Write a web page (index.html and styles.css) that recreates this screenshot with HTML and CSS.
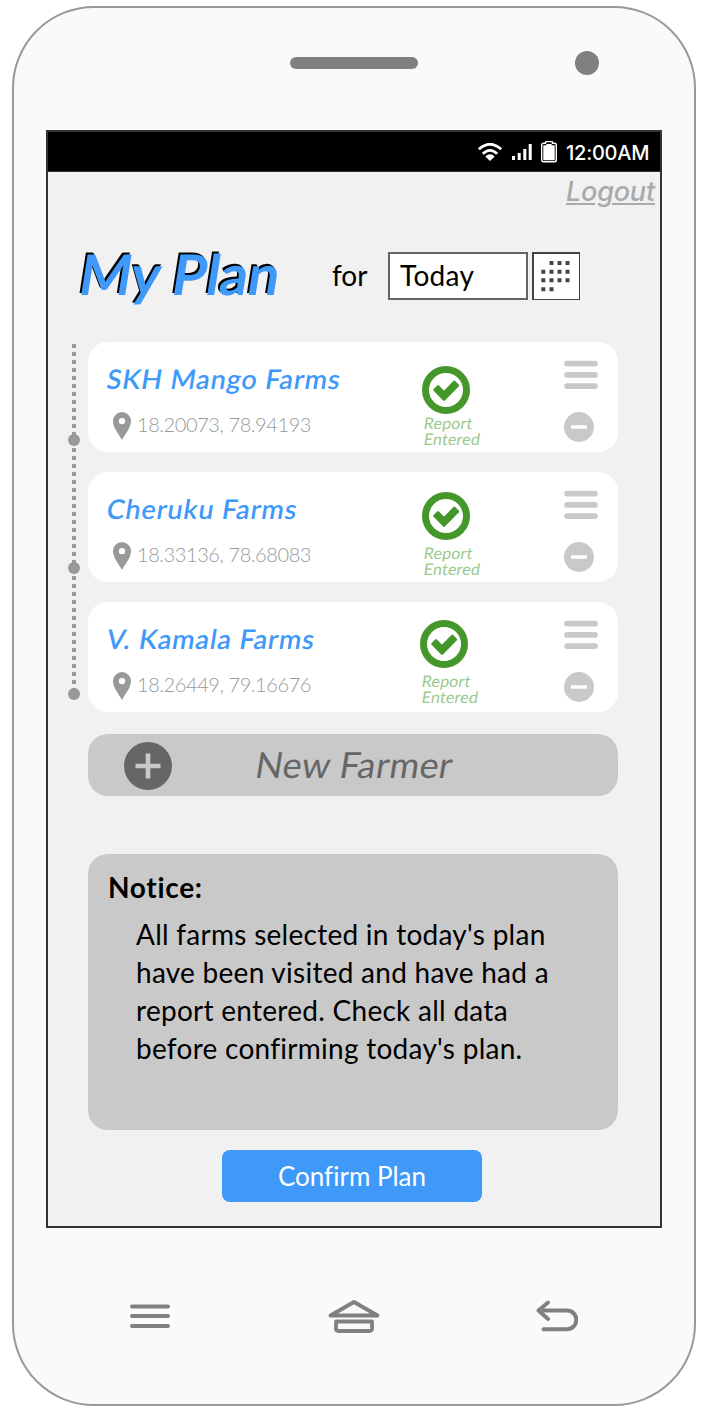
FILE: index.html
```html
<!DOCTYPE html>
<html lang="en">
<head>
<meta charset="utf-8">
<title>My Plan</title>
<link rel="stylesheet" href="styles.css">
</head>
<body>
<svg class="defs" aria-hidden="true">
  <symbol id="pin" viewBox="0 0 18 28"><path fill-rule="evenodd" d="M9 0a9 9 0 0 0-9 9c0 6.500 5.500 12.500 9 19 3.500-6.500 9-12.500 9-19a9 9 0 0 0-9-9zm0 5.900a3.200 3.200 0 1 1 0 6.400 3.200 3.200 0 0 1 0-6.400z"/></symbol>
  <symbol id="check" viewBox="0 0 48 48"><circle cx="24" cy="24" r="20.500" fill="none" stroke="currentColor" stroke-width="7"/><path d="M12.500 23.800L16 20.300l6 6L32.300 16l3.500 3.500L22 33.500z" fill="currentColor" stroke="currentColor" stroke-width="2.600" stroke-linejoin="round"/></symbol>
  <symbol id="bars" viewBox="0 0 34 29"><path d="M3 3.600h28M3 14.900h28M3 26.100h28" fill="none" stroke="currentColor" stroke-width="5.700" stroke-linecap="round"/></symbol>
  <symbol id="minus" viewBox="0 0 30 30"><circle cx="15" cy="15" r="15" fill="currentColor"/><path d="M7 15h16" stroke="#fff" stroke-width="3.400"/></symbol>
</svg>
<div class="phone">
  <header class="bezel">
    <span class="speaker"></span>
    <span class="camera"></span>
  </header>
  <main class="screen">
    <div class="statusbar">
      <svg class="wifi" viewBox="0 0 24 18"><path d="M.8 6.200Q12-3.700 23.200 6.200M4.800 10.700Q12 4 19.200 10.700" fill="none" stroke="#fff" stroke-width="2.800"/><path d="M7.300 13.500Q12 9 16.700 13.500L12 18z" fill="#fff"/></svg>
      <svg class="signal" viewBox="0 0 20 16"><path d="M0 12h3v4H0zM5.700 9h3v7h-3zM11.300 5h3v11h-3zM16.700 0h3v16h-3z" fill="#fff"/></svg>
      <svg class="battery" viewBox="0 0 16 22"><path d="M4.500 2.200V1.500Q4.500.5 5.500.5h5q1 0 1 1v.7h2q1.800 0 1.800 1.800v15q0 1.800-1.800 1.800h-11Q.7 20.800.7 19V4q0-1.800 1.800-1.800z" fill="none" stroke="#fff" stroke-width="1.400"/><path d="M2.300 4.200h3V3h5.400v1.200h3v15h-11.400z" fill="#fff"/></svg>
      <span class="clock">12:00AM</span>
    </div>
    <a class="logout">Logout</a>
    <div class="heading">
      <h1 class="title"><span class="slant">My Plan</span></h1>
      <span class="for">for</span>
      <div class="date">Today</div>
      <button class="calendar" aria-label="Pick a date">
        <svg viewBox="0 0 30 31"><path d="M8.500 0h4v4h-4zm8 0h4v4h-4zm8 0h4v4h-4zM.3 8.700h4v4h-4zm8.200 0h4v4h-4zm8 0h4v4h-4zm8 0h4v4h-4zM.3 17.300h4v4h-4zm8.200 0h4v4h-4zm8 0h4v4h-4zm8 0h4v4h-4zM.3 26.200h4v4h-4zm8.200 0h4v4h-4z" fill="#444"/></svg>
      </button>
    </div>
    <div class="plan">
      <svg class="timeline" viewBox="0 0 12 370"><path d="M6 2v352" stroke="#999" stroke-width="4" stroke-dasharray="4 4"/><circle cx="6" cy="98" r="6"/><circle cx="6" cy="226" r="6"/><circle cx="6" cy="352" r="6"/></svg>
      <div class="farms">
        <article class="farm">
          <div class="info"><h2 class="name"><span class="slant">SKH Mango Farms</span></h2><div class="place"><svg class="pin"><use href="#pin"/></svg><span class="coords">18.20073, 78.94193</span></div></div>
          <div class="status"><svg class="check"><use href="#check"/></svg><p class="report"><span class="slant">Report</span><span class="slant">Entered</span></p></div>
          <div class="actions"><svg class="bars"><use href="#bars"/></svg><svg class="minus"><use href="#minus"/></svg></div>
        </article>
        <article class="farm">
          <div class="info"><h2 class="name"><span class="slant">Cheruku Farms</span></h2><div class="place"><svg class="pin"><use href="#pin"/></svg><span class="coords">18.33136, 78.68083</span></div></div>
          <div class="status second"><svg class="check"><use href="#check"/></svg><p class="report"><span class="slant">Report</span><span class="slant">Entered</span></p></div>
          <div class="actions"><svg class="bars"><use href="#bars"/></svg><svg class="minus"><use href="#minus"/></svg></div>
        </article>
        <article class="farm">
          <div class="info"><h2 class="name"><span class="slant">V. Kamala Farms</span></h2><div class="place"><svg class="pin"><use href="#pin"/></svg><span class="coords">18.26449, 79.16676</span></div></div>
          <div class="status third"><svg class="check"><use href="#check"/></svg><p class="report"><span class="slant">Report</span><span class="slant">Entered</span></p></div>
          <div class="actions"><svg class="bars"><use href="#bars"/></svg><svg class="minus"><use href="#minus"/></svg></div>
        </article>
      </div>
    </div>
    <button class="new-farmer">
      <svg class="plus" viewBox="0 0 48 48"><circle cx="24" cy="24" r="24" fill="#666"/><path d="M11.500 24h25M24 11.500v25" stroke="#c9c9c9" stroke-width="4.600"/></svg>
      <span class="new-label slant">New Farmer</span>
    </button>
    <section class="notice">
      <h3 class="notice-title">Notice:</h3>
      <p class="notice-text">All farms selected in today's plan<br>have been visited and have had a<br>report entered. Check all data<br>before confirming today's plan.</p>
    </section>
    <button class="confirm">Confirm Plan</button>
  </main>
  <nav class="keys">
    <svg class="key-menu" viewBox="0 0 40 24"><path d="M2 2.400h36M2 12h36M2 22h36" fill="none" stroke="#808080" stroke-width="4" stroke-linecap="round"/></svg>
    <svg class="key-home" viewBox="0 0 52 34"><path d="M26 3L2.500 16.500h47z" fill="none" stroke="#808080" stroke-width="3.800" stroke-linejoin="round"/><path d="M8 22.500h36v7q0 2.500-2.500 2.500h-31Q8 32 8 29.500z" fill="none" stroke="#808080" stroke-width="3.800" stroke-linejoin="round"/></svg>
    <svg class="key-back" viewBox="0 0 42 32"><path d="M12 2.500L2.500 10.500l9.500 8.500M8 10.500H31a9.300 9.300 0 0 1 0 18.700H7.500" fill="none" stroke="#808080" stroke-width="4" stroke-linecap="round" stroke-linejoin="round"/></svg>
  </nav>
</div>
</body>
</html>
```
FILE: styles.css
```css
* { box-sizing: border-box; margin: 0; padding: 0; }
body { width: 706px; height: 1414px; padding: 6px 0 0 12px; background: #fff; font-family: Lato, "Open Sans", sans-serif; font-variant-ligatures: none; overflow: hidden; }
button { border: 0; font: inherit; }
svg { display: block; flex: none; }
span, h1, h2, h3 { white-space: nowrap; }
.defs { width: 0; height: 0; position: absolute; }
.slant { display: inline-block; transform: skewX(-9deg); }

.phone { width: 684px; height: 1400px; border: 2px solid #999; border-radius: 82px; background: #f9faf9; padding: 0 32px; }
.bezel { display: flex; height: 122px; padding: 43px 0 0 244px; gap: 157px; }
.speaker { width: 128px; height: 12px; margin-top: 6px; border-radius: 6px; background: #808080; }
.camera { width: 24px; height: 24px; border-radius: 50%; background: #808080; }

.screen { width: 616px; height: 1098px; border: 2px solid #333; background: #f1f1f1; display: flex; flex-direction: column; }
.statusbar { height: 40px; background: #000; border-bottom: 1px solid #333; display: flex; align-items: center; justify-content: flex-end; padding-right: 11px; color: #fff; }
.wifi { width: 24px; height: 18px; margin-right: 10px; }
.signal { width: 20px; height: 16px; margin-right: 9px; }
.battery { width: 16px; height: 22px; margin-right: 9px; }
.clock { font: 500 20px/24px Inter, sans-serif; width: 83px; margin-top: 3px; letter-spacing: -0.25px; }
.logout { align-self: flex-end; margin: 1px 4px 0 0; height: 37px; width: 90px; font: italic 500 27px/38px Inter, sans-serif; letter-spacing: -0.2px; color: #aaa; text-decoration: underline; text-decoration-thickness: 2px; text-underline-offset: 2px; white-space: nowrap; }

.heading { display: flex; height: 132px; padding: 42px 0 0 32px; }
.title { width: 252px; margin-top: -2px; font: 700 56px/48px Lato, sans-serif; letter-spacing: -0.4px; color: #3f99f8; text-shadow: -2px -2px 0 #000; }
.for { width: 56px; font-size: 28px; line-height: 46px; }
.date { width: 140px; height: 48px; margin-right: 4px; padding-left: 10px; border: 2px solid #666; background: #fff; font-size: 28px; line-height: 43px; letter-spacing: 0.3px; }
.calendar { display: flex; align-items: flex-start; width: 48px; height: 48px; padding: 6.500px 0 0 7.300px; border: solid #444; border-width: 2px 1px 1px 2px; background: #fff; }
.calendar svg { width: 30px; height: 31px; }

.plan { display: flex; gap: 8px; padding-left: 20px; }
.timeline { width: 12px; height: 370px; fill: #999; }
.farms { display: flex; flex-direction: column; gap: 20px; }
.farm { width: 530px; height: 110px; border-radius: 20px; background: #fff; display: flex; }
.info { width: 334px; padding: 20px 0 0 19px; }
.name { font: 600 27px/34px Lato, sans-serif; letter-spacing: 0.85px; color: #3f99f8; }
.place { display: flex; gap: 6px; padding: 16px 0 0 6px; }
.pin { width: 18px; height: 28px; fill: #999; }
.coords { font-size: 20px; line-height: 25px; font-weight: 300; color: #999; letter-spacing: -0.42px; }
.status { width: 142px; padding-top: 24px; }
.check { width: 48px; height: 48px; color: #45962b; }
.report { display: flex; flex-direction: column; align-items: flex-start; margin: 1px 0 0 2px; font-size: 16px; line-height: 16px; letter-spacing: 0.2px; color: #99c98c; }
.second { padding-top: 20px; }
.second .report { margin-top: 5px; }
.third { padding-top: 18px; margin-left: -2px; width: 144px; }
.third .report { margin-top: 5px; }
.actions { padding-top: 18px; color: #c9c9c9; }
.bars { width: 34px; height: 29px; margin-bottom: 23px; }
.minus { width: 30px; height: 30px; }

.new-farmer { width: 530px; height: 62px; margin: 22px 0 0 40px; padding-left: 36px; border-radius: 20px; background: #c9c9c9; display: flex; align-items: center; gap: 84px; }
.plus { width: 48px; height: 48px; margin-top: 2px; }
.new-label { margin-top: -3px; font-size: 36px; line-height: 48px; letter-spacing: 0.4px; color: #666; }
.notice { width: 530px; height: 276px; margin: 58px 0 0 40px; padding: 14px 20px; border-radius: 20px; background: #c9c9c9; }
.notice-title { font-size: 28px; line-height: 38px; letter-spacing: 0.7px; }
.notice-text { padding: 9px 0 0 28px; font-size: 28px; line-height: 38px; letter-spacing: 0.27px; white-space: nowrap; }
.confirm { width: 260px; height: 52px; margin: 20px 0 0 174px; border-radius: 8px; background: #3f99f8; color: #fff; font-size: 26px; line-height: 52px; }

.keys { display: flex; align-items: center; padding: 0 0 2px 84px; height: 178px; }
.key-menu { width: 40px; height: 24px; }
.key-home { width: 52px; height: 34px; margin-left: 158px; }
.key-back { width: 42px; height: 32px; margin-left: 156px; }
```
